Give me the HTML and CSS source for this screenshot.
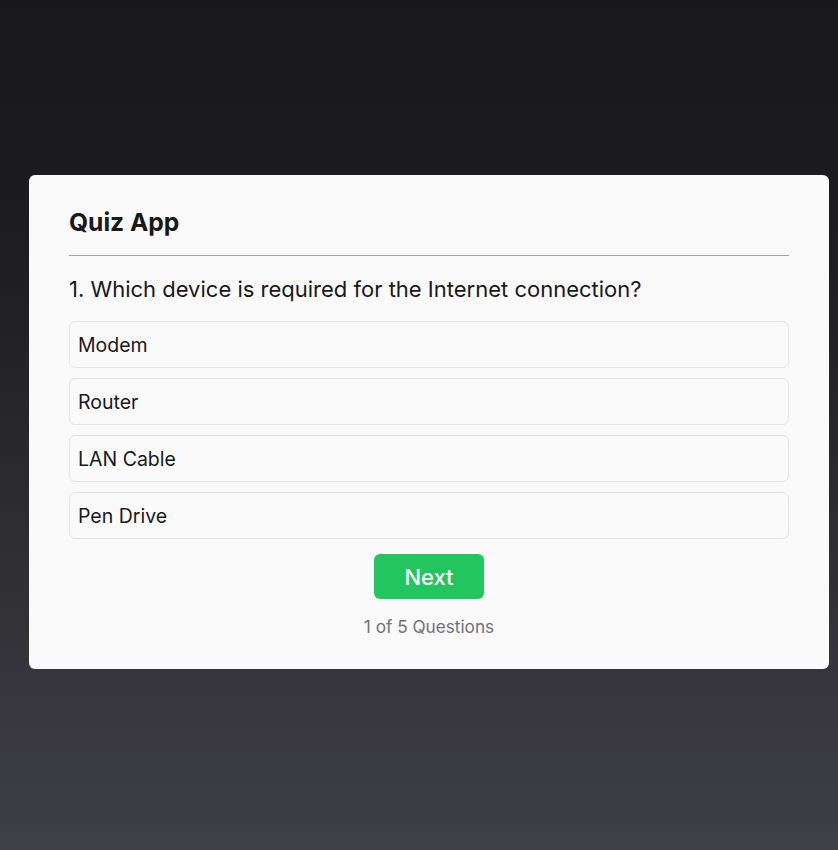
FILE: index.html
```html
<!DOCTYPE html>
<html lang="en">
<head>
<meta charset="utf-8">
<title>Quiz App</title>
<link rel="stylesheet" href="styles.css">
</head>
<body>
<main class="page">
  <section class="card">
    <h1 class="title">Quiz App</h1>
    <hr class="divider">
    <h2 class="question">1. Which device is required for the Internet connection?</h2>
    <ul class="options">
      <li class="option">Modem</li>
      <li class="option">Router</li>
      <li class="option">LAN Cable</li>
      <li class="option">Pen Drive</li>
    </ul>
    <button class="next">Next</button>
    <p class="progress">1 of 5 Questions</p>
  </section>
</main>
</body>
</html>
```
FILE: styles.css
```css
* { box-sizing: border-box; }
html, body { margin: 0; padding: 0; height: 100%; }
body {
  font-family: Inter, "Noto Sans", "Liberation Sans", sans-serif;
  background: linear-gradient(to bottom, #18181b 0%, #1e1e21 30%, #3f3f46 100%);
  color: #18181b;
}
.page {
  height: 850px;
  display: flex;
  flex-direction: column;
  justify-content: center;
  padding: 0 0 6px 29px;
}
.card {
  width: 800px;
  background: #fafafa;
  border-radius: 6px;
  padding: 31px 40px 30px;
  display: flex;
  flex-direction: column;
  align-items: stretch;
}
.title {
  margin: 0;
  font-size: 24.6px;
  line-height: 32px;
  font-weight: 700;
  color: #18181b;
}
.divider {
  margin: 17px 0 0;
  border: 0;
  height: 1px;
  background: #a1a1aa;
}
.question {
  margin: 19px 0 18px;
  font-size: 22px;
  line-height: 28px;
  font-weight: 400;
  color: #18181b;
}
.options {
  list-style: none;
  margin: 0;
  padding: 0;
  display: flex;
  flex-direction: column;
  gap: 10px;
}
.option {
  border: 1px solid #e4e4e7;
  border-radius: 6px;
  padding: 10px 8px 8px;
  font-size: 19.5px;
  line-height: 27px;
  color: #18181b;
}
.next {
  align-self: center;
  margin-top: 15px;
  width: 110px;
  height: 45px;
  border: 0;
  border-radius: 6px;
  background: #22c55e;
  color: #ffffff;
  font-family: inherit;
  font-size: 22px;
  font-weight: 500;
  line-height: 28px;
}
.progress {
  margin: 16px 0 0;
  text-align: center;
  font-size: 17.2px;
  line-height: 24px;
  color: #71717a;
}
```
